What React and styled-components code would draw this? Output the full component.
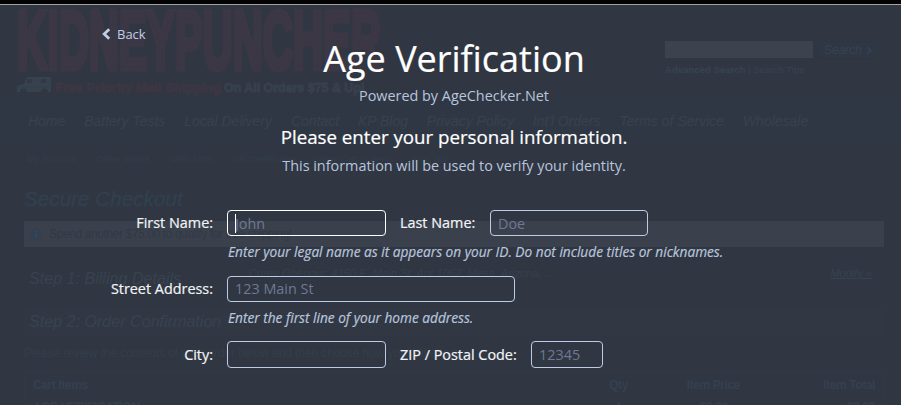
import React from "react";
import styled, { createGlobalStyle } from "styled-components";

const GlobalStyle = createGlobalStyle`
  * {
    box-sizing: border-box;
  }

  body {
    margin: 0;
    background: #303742;
    overflow: hidden;
  }
`;

const Screen = styled.div`
  position: relative;
  width: 901px;
  height: 405px;
  overflow: hidden;
`;

/* dimmed store page */

const Store = styled.div`
  height: 405px;
  overflow: hidden;
  border-top: 4px solid #030303;
  background: #303742;
  font-family: "Liberation Sans", Arial, sans-serif;
  color: #384351;
  white-space: nowrap;
`;

const Header = styled.header`
  display: flex;
  justify-content: space-between;
  height: 94px;
  border-top: 1px solid #a3a39f;
  padding: 0 23px 0 15px;
`;

const Logo = styled.svg`
  display: block;
  width: 370px;
  height: 93px;
`;

const Search = styled.div`
  width: 213px;
  padding-top: 36px;

  p {
    margin: 5px 0 0;
    font-size: 9.6px;
    line-height: 12px;
    color: #364352;
  }
`;

const SearchRow = styled.div`
  display: flex;
  gap: 4px;
`;

const SearchBox = styled.div`
  width: 148px;
  height: 17px;
  background: #3d434e;
`;

const SearchButton = styled.div`
  display: flex;
  align-items: center;
  justify-content: space-between;
  width: 61px;
  height: 18px;
  padding: 0 5px 0 6px;
  border: 1px solid #2e3541;
  background: #2f3744;
  font-size: 12px;
  font-style: italic;
  color: #374250;
`;

const Nav = styled.nav`
  display: flex;
  gap: ${(props) => props.$gap};
  height: ${(props) => props.$height};
  padding: ${(props) => props.$padding};
  font-size: ${(props) => props.$size};
  line-height: 16px;
  font-style: ${(props) => (props.$italic ? "italic" : "normal")};
  color: ${(props) => props.$color};
  background: ${(props) => props.$background};
`;

const Content = styled.main`
  padding: 0 17px 0 24px;

  h2 {
    margin: 0 0 10px;
    font-size: 20.7px;
    line-height: 24px;
    font-weight: normal;
    font-style: italic;
    color: #314050;
    -webkit-text-stroke: 0.3px #314050;
  }
`;

const Notice = styled.div`
  display: flex;
  align-items: center;
  gap: 7px;
  height: 26px;
  padding-left: 6px;
  background: #3b414c;
  color: #303a47;
  font-size: 12px;
  letter-spacing: -0.4px;

  svg {
    flex: none;
  }
`;

const Step = styled.div`
  display: flex;
  justify-content: space-between;
  height: ${(props) => props.$height};
  margin-top: ${(props) => props.$top};
  padding: 2px 12px 0 5px;
  font-size: 16.1px;
  line-height: 22px;
  font-style: italic;
  color: #384250;
  background: ${(props) => props.$background};

  span {
    flex: 1;
    padding-left: 68px;
    font-size: 11.2px;
    line-height: 12px;
    color: #35404e;
  }

  u {
    font-size: 11px;
    line-height: 13px;
    color: #364251;
  }
`;

const Review = styled.p`
  margin: 10px 0 11px;
  font-size: 12px;
  line-height: 14px;
  letter-spacing: -0.1px;
  color: #343e4b;
`;

const Cart = styled.div`
  display: grid;
  grid-template-columns: 1fr 100px 112px 135px;
  row-gap: 8px;
  width: 860px;
  padding: 6px 8px;
  border: 1px solid #323945;
  font-size: 12px;
  font-weight: bold;
  line-height: 14px;
  letter-spacing: -0.4px;
  color: #354050;
`;

const Cell = styled.span`
  text-align: ${(props) => props.$align || "right"};
  padding-right: ${(props) => props.$inset || 0};
`;

/* age verification overlay */

const Overlay = styled.section`
  position: absolute;
  inset: 5px 0 0;
  font-family: "Open Sans", sans-serif;
  font-size: 14.4px;
  color: #b8c5dd;
  white-space: nowrap;
`;

const Back = styled.a`
  display: flex;
  align-items: center;
  gap: 6px;
  height: 20px;
  margin: 19px 0 0 102px;
  font-size: 13px;
  color: #c0cee6;
`;

const Intro = styled.div`
  width: 908px;
  text-align: center;

  h1 {
    margin: -9px 0 0;
    font-size: 36px;
    line-height: 48px;
    font-weight: 400;
    color: #fff;
    -webkit-text-stroke: 0.2px #fff;
  }

  h3 {
    margin: 19px 0 0;
    font-size: 18.72px;
    line-height: 24px;
    font-weight: 400;
    color: #fff;
    -webkit-text-stroke: 0.2px #fff;
  }

  p {
    margin: 3px 0 0;
    line-height: 20px;
  }

  h3 + p {
    margin-top: 7px;
  }
`;

const Form = styled.form`
  margin-top: 34px;
`;

const Row = styled.div`
  display: flex;
  align-items: center;
  height: ${(props) => props.$height || "26px"};
`;

const Label = styled.label`
  width: ${(props) => props.$width};
  text-align: ${(props) => props.$align || "left"};
  margin-right: 14px;
  line-height: 20px;
  color: #f2f4f7;
  -webkit-text-stroke: 0.2px #f2f4f7;
`;

const Field = styled.div`
  position: relative;
  width: ${(props) => props.$width};
  height: 100%;
  margin-right: 14px;
  border: 1px solid ${(props) => (props.$active ? "#fff" : "#bdcce6")};
  border-radius: 4px;

  input {
    display: block;
    width: 100%;
    height: 100%;
    padding: 0 7px ${(props) => props.$lift || "0"};
    border: 0;
    outline: 0;
    background: transparent;
    color: #fff;
    font: inherit;
  }

  input::placeholder {
    color: #6c7a94;
    opacity: 1;
  }
`;

const Caret = styled.i`
  position: absolute;
  left: 7px;
  top: 3px;
  width: 1px;
  height: 19px;
  background: #fff;
`;

const Hint = styled.p`
  height: ${(props) => props.$height};
  margin: 0;
  padding: 6px 0 0 228px;
  font-size: 13.68px;
  line-height: 20px;
  font-style: italic;
  -webkit-text-stroke: 0.2px #b8c5dd;
`;

const mainLinks = [
  "Home",
  "Battery Tests",
  "Local Delivery",
  "Contact",
  "KP Blog",
  "Privacy Policy",
  "Int'l Orders",
  "Terms of Service",
  "Wholesale",
];

const accountLinks = [
  "My Account",
  "Order Status",
  "Wish Lists",
  "Gift Certificates",
  "View Cart (1 item)",
  "Sign out",
];

const StoreLogo = () => (
  <Logo viewBox="0 0 370 93" fontFamily="Liberation Sans, sans-serif" fontWeight="bold">
    <g transform="translate(2 64) scale(1 2.2)">
      <text
        fontSize="38"
        textLength="364"
        lengthAdjust="spacingAndGlyphs"
        fill="#3b3744"
        stroke="#3b3744"
        strokeWidth="2.6"
      >
        KIDNEYPUNCHER
      </text>
    </g>
    <path
      d="M2 87v-6l7-2 3-7h24v15h-3a3.5 3.5 0 0 0-7 0H12a3.5 3.5 0 0 0-7 0z"
      fill="#37424e"
    />
    <path d="M13 74h4v4h-6zM26 74h5v4h-5z" fill="#303945" />
    <path d="M3 82h32" stroke="#333e4a" />
    <g fontSize="13" strokeWidth="0.9">
      <text
        x="40"
        y="87"
        textLength="166"
        lengthAdjust="spacingAndGlyphs"
        fill="#3d3643"
        stroke="#3d3643"
      >
        Free Priority Mail Shipping
      </text>
      <text
        x="209"
        y="87"
        textLength="141"
        lengthAdjust="spacingAndGlyphs"
        fill="#37414d"
        stroke="#37414d"
      >
        On All Orders $75 &amp; Up!
      </text>
    </g>
  </Logo>
);

const StorePage = () => (
  <Store>
    <Header>
      <StoreLogo />
      <Search>
        <SearchRow>
          <SearchBox />
          <SearchButton>
            Search
            <svg width="6" height="9" viewBox="0 0 6 9" fill="none">
              <path d="M1 1l4 3.5L1 8" stroke="#30465a" strokeWidth="1.4" />
            </svg>
          </SearchButton>
        </SearchRow>
        <p>
          <b>Advanced Search</b> | Search Tips
        </p>
      </Search>
    </Header>
    <Nav
      $gap="18.8px"
      $height="46px"
      $padding="15px 0 0 28px"
      $size="14px"
      $color="#364250"
      $background="#303744"
      $italic
    >
      {mainLinks.map((link) => (
        <span key={link}>{link}</span>
      ))}
    </Nav>
    <Nav
      $gap="19px"
      $height="43px"
      $padding="7px 0 0 27px"
      $size="9.6px"
      $color="#323e4b"
      $background="#303743"
    >
      {accountLinks.map((link) => (
        <span key={link}>{link}</span>
      ))}
    </Nav>
    <Content>
      <h2>Secure Checkout</h2>
      <Notice>
        <svg width="12" height="12" viewBox="0 0 12 12">
          <circle cx="6" cy="6" r="6" fill="#334052" />
          <path d="M6 2.5v1.5M6 5v4.5" stroke="#3c4858" strokeWidth="1.6" />
        </svg>
        Spend another $75.00 to qualify for free shipping!
      </Notice>
      <Step $top="18px" $height="31px">
        Step 1: Billing Details
        <span>Corey Obenour, 4150 E. Main St, Apt 1062, Mesa, Arizona, ...</span>
        <u>Modify »</u>
      </Step>
      <Step $top="12px" $height="28px" $background="#313844">
        Step 2: Order Confirmation
      </Step>
      <Review>
        Please review the contents of your order below and then choose how you'd
        like to pay
      </Review>
      <Cart>
        <Cell $align="left">Cart Items</Cell>
        <Cell>Qty</Cell>
        <Cell>Item Price</Cell>
        <Cell>Item Total</Cell>
        <Cell $align="left">AGE VERIFICATION</Cell>
        <Cell $inset="6px">1</Cell>
        <Cell $inset="12px">$0.00</Cell>
        <Cell>$0.00</Cell>
      </Cart>
    </Content>
  </Store>
);

const AgeVerification = () => (
  <Overlay>
    <Back>
      <svg width="9" height="12" viewBox="0 0 9 12" fill="none">
        <path d="M7.2 1.2L2.2 6l5 4.8" stroke="#c0cee6" strokeWidth="2.8" />
      </svg>
      Back
    </Back>
    <Intro>
      <h1>Age Verification</h1>
      <p>Powered by AgeChecker.Net</p>
      <h3>Please enter your personal information.</h3>
      <p>This information will be used to verify your identity.</p>
    </Intro>
    <Form>
      <Row>
        <Label $width="213px" $align="right">
          First Name:
        </Label>
        <Field $width="159px" $active>
          <input placeholder="John" />
          <Caret />
        </Field>
        <Label $width="76px">Last Name:</Label>
        <Field $width="158px">
          <input placeholder="Doe" />
        </Field>
      </Row>
      <Hint $height="40px">
        Enter your legal name as it appears on your ID. Do not include titles or
        nicknames.
      </Hint>
      <Row>
        <Label $width="213px" $align="right">
          Street Address:
        </Label>
        <Field $width="288px" $lift="2px">
          <input placeholder="123 Main St" />
        </Field>
      </Row>
      <Hint $height="39px">Enter the first line of your home address.</Hint>
      <Row $height="27px">
        <Label $width="213px" $align="right">
          City:
        </Label>
        <Field $width="159px">
          <input />
        </Field>
        <Label $width="117px">ZIP / Postal Code:</Label>
        <Field $width="72px">
          <input placeholder="12345" />
        </Field>
      </Row>
    </Form>
  </Overlay>
);

const App = () => (
  <Screen>
    <GlobalStyle />
    <StorePage />
    <AgeVerification />
  </Screen>
);

export default App;
